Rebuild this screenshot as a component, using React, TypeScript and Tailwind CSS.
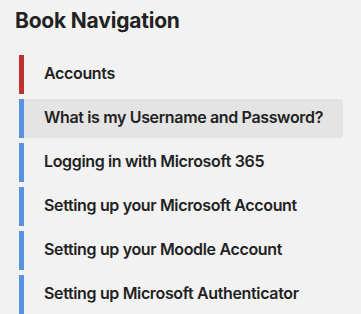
import React from 'react';

type NavItem = {
  id: number;
  title: string;
  chapter?: boolean;
  active?: boolean;
};

const items: NavItem[] = [
  { id: 1, title: 'Accounts', chapter: true },
  { id: 2, title: 'What is my Username and Password?', active: true },
  { id: 3, title: 'Logging in with Microsoft 365' },
  { id: 4, title: 'Setting up your Microsoft Account' },
  { id: 5, title: 'Setting up your Moodle Account' },
  { id: 6, title: 'Setting up Microsoft Authenticator' },
];

const App: React.FC = () => {
  return (
    <div
      className="min-h-[314px] w-[361px] overflow-hidden bg-[#f2f2f2] text-[#222222]"
      style={{ fontFamily: 'Inter, "Noto Sans", sans-serif' }}
    >
      <h2 className="pl-[15px] pt-[7px] text-[21px] font-bold leading-[28px] tracking-[-0.2px]">
        Book Navigation
      </h2>

      {/* chapter + pages */}
      <ul className="mt-[20px] flex flex-col gap-[5px] pl-[19px] pr-[18px]">
        {items.map((item) => (
          <li
            key={item.id}
            className={`flex h-[39px] items-center border-l-[5px] pb-[3px] pl-[20px] rounded-r-[2px] ${
              item.chapter ? 'border-[#c12f2f]' : 'border-[#5a93dd]'
            } ${item.active ? 'bg-[#e4e4e4]' : ''}`}
          >
            <span className="text-[16px] font-semibold tracking-[-0.35px]">{item.title}</span>
          </li>
        ))}
      </ul>
    </div>
  );
};

export default App;
